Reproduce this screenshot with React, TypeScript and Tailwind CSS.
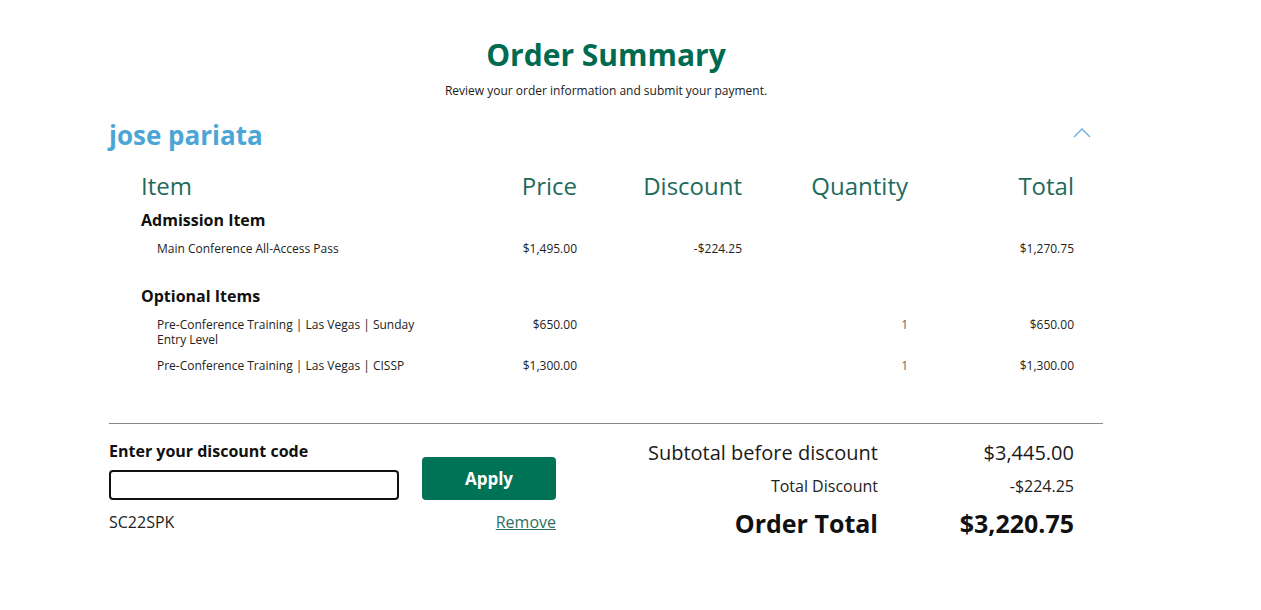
import React from 'react';

type Row = { name: string; price: string; discount?: string; qty?: string; total: string };

const sections: { title: string; rows: Row[] }[] = [
  {
    title: 'Admission Item',
    rows: [{ name: 'Main Conference All-Access Pass', price: '$1,495.00', discount: '-$224.25', total: '$1,270.75' }],
  },
  {
    title: 'Optional Items',
    rows: [
      { name: 'Pre-Conference Training | Las Vegas | Sunday Entry Level', price: '$650.00', qty: '1', total: '$650.00' },
      { name: 'Pre-Conference Training | Las Vegas | CISSP', price: '$1,300.00', qty: '1', total: '$1,300.00' },
    ],
  },
];

const cols = 'grid grid-cols-[270px_166px_165px_166px_166px]';

const App: React.FC = () => {
  return (
    <div className="min-h-screen bg-white font-['Open_Sans',sans-serif] text-[#1a1a1a]">
      <div className="ml-[109px] w-[994px] pt-[37px]">
        <h1 className="text-center text-[30px] leading-[36px] font-bold text-[#006b50]">Order Summary</h1>
        <p className="mt-[10px] text-center text-[12px] leading-[16px] text-[#1a1a1a]">
          Review your order information and submit your payment.
        </p>

        <div className="mt-[18px] flex items-center justify-between pr-[12px]">
          <h2 className="text-[26px] leading-[36px] font-bold text-[#4ba6d6]">jose pariata</h2>
          <svg width="18" height="11" viewBox="0 0 18 11" fill="none" className="-mt-[6px]">
            <path d="M1 10L9 2L17 10" stroke="#6aaedb" strokeWidth="1.3" />
          </svg>
        </div>

        {/* line items */}
        <div className="ml-[32px] w-[933px]">
          <div className={`${cols} mt-[17px] text-[24px] leading-[32px] text-[#1e6b5c]`}>
            <div>Item</div>
            <div className="text-right">Price</div>
            <div className="text-right">Discount</div>
            <div className="text-right">Quantity</div>
            <div className="text-right">Total</div>
          </div>

          {sections.map((s, i) => (
            <div key={s.title} className={i === 0 ? 'mt-[7px]' : 'mt-[29px]'}>
              <h3 className="text-[16px] leading-[22px] font-bold text-[#111]">{s.title}</h3>
              {s.rows.map((r, j) => (
                <div
                  key={r.name}
                  className={`${cols} ${j === 0 ? 'mt-[10px]' : 'mt-[11px]'} text-[12px] leading-[15px] text-[#222]`}
                >
                  <div className="pl-[16px]">
                    <div className="w-[262px]">{r.name}</div>
                  </div>
                  <div className="text-right">{r.price}</div>
                  <div className="text-right">{r.discount ?? ''}</div>
                  <div className="text-right text-[#666]">{r.qty ?? ''}</div>
                  <div className="text-right">{r.total}</div>
                </div>
              ))}
            </div>
          ))}
        </div>

        <div className="mt-[50px] border-t border-[#888]" />

        <div className="flex">
          {/* discount code */}
          <div className="w-[447px]">
            <div className="flex items-end justify-between">
              <div className="pt-[16px]">
                <label className="block text-[16px] leading-[22px] font-bold text-[#111]">Enter your discount code</label>
                <input
                  type="text"
                  className="mt-[8px] block h-[30px] w-[290px] rounded-[4px] border-2 border-[#111] px-2 outline-none"
                />
              </div>
              <button className="h-[43px] w-[134px] rounded-[4px] bg-[#007256] text-[17px] font-bold text-white">
                Apply
              </button>
            </div>
            <div className="mt-[11px] flex justify-between text-[16px] leading-[22px]">
              <span className="text-[#222]">SC22SPK</span>
              <a href="#" className="text-[#2f6f63] underline">
                Remove
              </a>
            </div>
          </div>

          {/* totals */}
          <div className="ml-auto mr-[29px] pt-[15px]">
            <div className="grid grid-cols-[auto_196px] items-center text-right">
              <div className="text-[20px] leading-[28px] text-[#1a1a1a]">Subtotal before discount</div>
              <div className="text-[20px] leading-[28px] text-[#1a1a1a]">$3,445.00</div>
              <div className="mt-[8px] text-[16px] leading-[22px] text-[#222]">Total Discount</div>
              <div className="mt-[8px] text-[16px] leading-[22px] text-[#222]">-$224.25</div>
              <div className="mt-[10px] text-[25px] leading-[33px] font-bold text-[#111]">Order Total</div>
              <div className="mt-[10px] text-[25px] leading-[33px] font-bold text-[#111]">$3,220.75</div>
            </div>
          </div>
        </div>
      </div>
    </div>
  );
};

export default App;
